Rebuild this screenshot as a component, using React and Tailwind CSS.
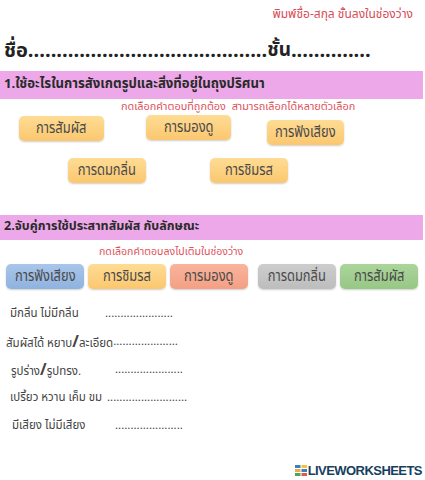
const thai = "font-['Noto_Sans_Thai','Noto_Sans','Liberation_Sans','DejaVu_Sans',sans-serif]";

function Chip({ children, className = "" }) {
  return (
    <div className={`flex h-[25px] items-center justify-center rounded-[5px] text-[15px] leading-none text-[#4a4a4a] shadow-[0_1px_2px_rgba(0,0,0,0.2)] ${className}`}>
      <span className="inline-block scale-x-[0.86] whitespace-nowrap">{children}</span>
    </div>
  );
}

function Band({ children, className = "" }) {
  return (
    <div className={`flex w-[423px] items-center bg-[#eca8e8] pl-1 font-bold leading-none text-[#2a2a2a] ${className}`}>
      {children}
    </div>
  );
}

function Line({ label, dots, labelWidth, pad }) {
  return (
    <div className={`flex h-[28px] items-center whitespace-pre text-[11.5px] leading-none text-[#444] ${pad}`}>
      <span className={labelWidth}>{label}</span>
      <span>{dots}</span>
    </div>
  );
}

const Slash = () => <span className="text-[16px] font-bold">/</span>;
const orange = "bg-gradient-to-b from-[#fedc94] to-[#fbc76f]";

export default function App() {
  return (
    <div className={`h-[480px] w-[425px] overflow-hidden bg-white ${thai}`}>
      <div className="flex h-[27px] items-center justify-end pr-[12px] text-[12px] leading-none text-[#d84a55]">พิมพ์ชื่อ-สกุล ชั้นลงในช่องว่าง</div>
      <div className="flex h-[44px] items-center whitespace-nowrap pl-1 pt-[3px] text-[20px] font-bold leading-none text-[#222]">
        <span>ชื่อ..........................................</span>
        <span className="text-[19px]">ชั้น</span>
        <span>..............</span>
      </div>
      <Band className="h-[28px] text-[13.2px]">1.ใช้อะไรในการสังเกตรูปและสิ่งที่อยู่ในถุงปริศนา</Band>
      <div className="flex h-[17px] items-center whitespace-pre pl-[121px] text-[10.9px] leading-none text-[#e0525c]">กดเลือกคำตอบที่ถูกต้อง  สามารถเลือกได้หลายตัวเลือก</div>
      <div className="flex h-[30px] items-start">
        <Chip className={`ml-[19px] w-[85px] ${orange}`}>การสัมผัส</Chip>
        <Chip className={`ml-[42px] -mt-px w-[85px] ${orange}`}>การมองดู</Chip>
        <Chip className={`ml-[36px] mt-[4px] w-[77px] ${orange}`}>การฟังเสียง</Chip>
      </div>
      <div className="flex h-[69px] items-start pt-[12px]">
        <Chip className={`ml-[68px] w-[78px] ${orange}`}>การดมกลิ่น</Chip>
        <Chip className={`ml-[64px] w-[78px] ${orange}`}>การชิมรส</Chip>
      </div>
      <Band className="h-[25px] text-[12.5px]">2.จับคู่การใช้ประสาทสัมผัส กับลักษณะ</Band>
      <div className="flex h-[24px] items-center pl-[99px] text-[10.6px] leading-none text-[#e0525c]">กดเลือกคำตอบลงไปเติมในช่องว่าง</div>
      <div className="flex items-start pl-[6px]">
        <Chip className="w-[78px] bg-gradient-to-b from-[#a9c6ea] to-[#8fb2de]">การฟังเสียง</Chip>
        <Chip className={`ml-[4px] w-[78px] ${orange}`}>การชิมรส</Chip>
        <Chip className="ml-[4px] w-[78px] bg-gradient-to-b from-[#f8b49c] to-[#f3a084]">การมองดู</Chip>
        <Chip className="ml-[10px] w-[78px] bg-gradient-to-b from-[#cdcdcd] to-[#bdbdbd]">การดมกลิ่น</Chip>
        <Chip className="ml-[4px] w-[78px] bg-gradient-to-b from-[#abd59b] to-[#97c785]">การสัมผัส</Chip>
      </div>
      <div className="mt-[11px] flex flex-col">
        <Line pad="pl-[10px]" labelWidth="w-[95px]" label="มีกลิ่น ไม่มีกลิ่น" dots="......................" />
        <Line pad="pl-[6px]" labelWidth="" label={<>สัมผัสได้ หยาบ<Slash />ละเอียด</>} dots="....................." />
        <Line pad="pl-[11px]" labelWidth="w-[104px]" label={<>รูปร่าง<Slash />รูปทรง.</>} dots="......................" />
        <Line pad="pl-[10px]" labelWidth="w-[97px]" label="เปรี้ยว หวาน เค็ม ขม" dots=".........................." />
        <Line pad="pl-[12px]" labelWidth="w-[103px]" label="มีเสียง ไม่มีเสียง" dots="......................" />
      </div>
      <div className="mt-[24px] flex items-center justify-end pr-[3px]">
        <svg width="12" height="11" viewBox="0 0 12 11" className="mr-px">
          <rect x="0" y="0" width="5.5" height="3" fill="#3b7fc4" />
          <rect x="0" y="4" width="5.5" height="3" fill="#f2a93b" />
          <rect x="0" y="8" width="5.5" height="3" fill="#4aa564" />
          <rect x="6.5" y="0" width="5.5" height="3" fill="#f2c53b" />
          <rect x="6.5" y="4" width="5.5" height="3" fill="#3b7fc4" />
          <rect x="6.5" y="8" width="5.5" height="3" fill="#e0584f" />
        </svg>
        <span className="font-['Liberation_Sans',sans-serif] text-[13px] font-bold leading-none tracking-[-0.55px] text-[#17405f]">LIVEWORKSHEETS</span>
      </div>
    </div>
  );
}
